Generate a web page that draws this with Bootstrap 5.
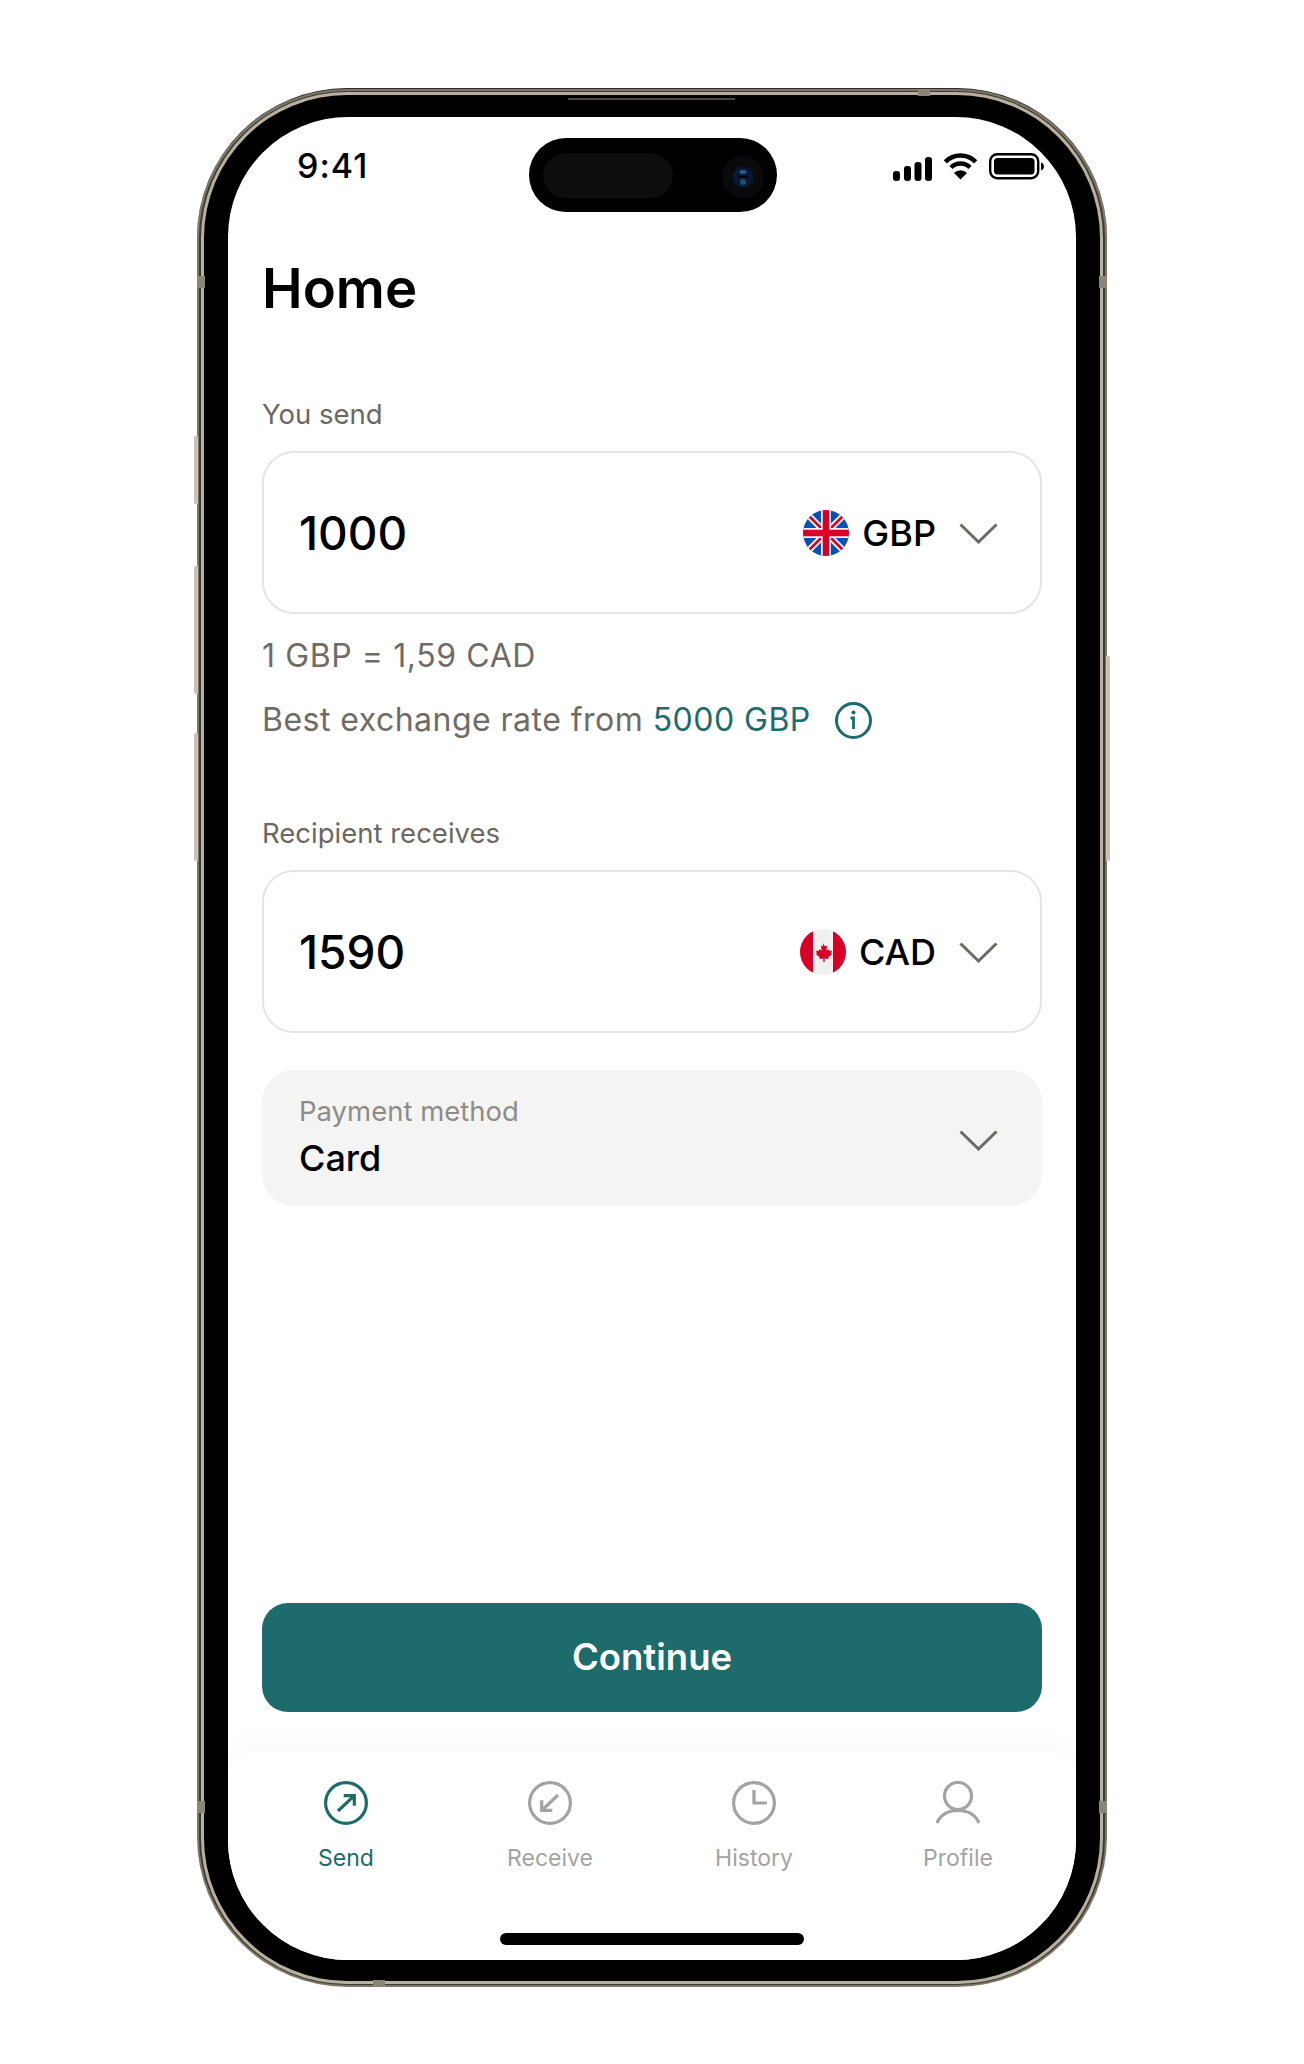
<!DOCTYPE html>
<html lang="en">
<head>
    <meta charset="UTF-8">
    <meta name="viewport" content="width=device-width, initial-scale=1.0">
    <title>Home</title>
    <link rel="stylesheet" href="https://cdn.jsdelivr.net/npm/bootstrap@5.3.0/dist/css/bootstrap.min.css">
    <style>
        body { background: #fff; font-family: "Inter", "Liberation Sans", sans-serif; color: #000; }
        .page-wrap { padding: 88px 0 77px; }

        /* phone body */
        .phone-shell { position: relative; width: 910px; height: 1899px; padding: 2px; border-radius: 150px; background: #7d776a; border-top: 1px solid #2f2c26; }
        .phone-band { height: 100%; padding: 1px 2px; border-radius: 148px; background: #3e3a33; }
        .phone-rim { height: 100%; padding: 3px; border-radius: 146px; background: #b8b0a0; }
        .phone-bezel { height: 100%; padding: 22px 24px 21px; border-radius: 143px; background: #000; }
        .phone-screen { height: 100%; border-radius: 120px; background: #fff; overflow: hidden; }
        .speaker-slit { position: absolute; top: 9px; left: 371px; width: 167px; height: 2px; background: #4a4741; }
        .side-key { position: absolute; width: 4px; background: #c9c2b2; border-radius: 2px 0 0 2px; }
        .key-a { left: -3px; top: 347px; height: 68px; }
        .key-b { left: -3px; top: 477px; height: 128px; }
        .key-c { left: -3px; top: 644px; height: 128px; }
        .key-d { right: -3px; top: 567px; height: 205px; border-radius: 0 2px 2px 0; }
        .ant-mark { position: absolute; background: #8a8577; }
        .ant-l1 { left: 0; top: 187px; width: 8px; height: 12px; }
        .ant-r1 { right: 0; top: 187px; width: 8px; height: 12px; }
        .ant-l2 { left: 0; top: 1712px; width: 8px; height: 12px; }
        .ant-r2 { right: 0; top: 1712px; width: 8px; height: 12px; }
        .ant-t { top: 0; left: 721px; width: 12px; height: 7px; }
        .ant-b { bottom: 0; left: 176px; width: 12px; height: 7px; }

        /* status bar */
        .status-row { height: 95px; padding-top: 21px; }
        .clock-text { width: 301px; padding-left: 69px; padding-top: 8px; font-size: 34px; line-height: 40px; font-weight: 500; letter-spacing: 1px; }
        .island { width: 248px; height: 74px; border-radius: 37px; background: #000; padding: 15px 14px; }
        .island-pill { width: 130px; height: 45px; border-radius: 23px; background: #0d0d0d; }
        .island-cam { margin-right: -1px; margin-top: 3px; }
        .status-icons { width: 299px; padding: 15px 0 0 116px; gap: 11px; }

        /* content */
        .main-pane { padding: 0 34px; }
        .page-title { margin: 44px 0 76px; font-size: 54.5px; line-height: 64px; font-weight: 600; font-family: "Inter", sans-serif; }
        .field-label { font-size: 27.5px; line-height: 36px; color: #6b6862; margin-bottom: 19px; }
        .amount-box { height: 163px; border: 2px solid #e5e5e4; border-radius: 32px; padding: 0 42px 0 35px; }
        .amount-value { font-size: 46px; line-height: 56px; font-weight: 500; }
        .currency-code { font-size: 36px; line-height: 44px; font-weight: 500; margin-left: 13px; margin-right: 23px; }
        .chev-icon { margin-top: 2px; }
        .rate-line { font-size: 32px; line-height: 40px; color: #6f6b66; letter-spacing: .6px; }
        .rate-tight { letter-spacing: .47px; }
        .teal-text { color: #1d6b6b; }
        .pay-box { height: 136px; margin-top: 37px; padding: 0 44px 0 37px; border-radius: 32px; background: #f4f4f4; }
        .pay-box .chev-icon { margin-top: 4px; }
        .pay-hint { font-size: 27.5px; line-height: 36px; color: #8f8c86; margin-top: -4px; }
        .pay-value { font-size: 36px; line-height: 44px; font-weight: 500; margin-top: 7px; }
        .go-btn { height: 109px; margin-bottom: 39px; border-radius: 26px; background: #1d6b6b; border: 0; color: #fff; font-size: 36.5px; font-weight: 600; }
        .go-btn:hover { background: #1d6b6b; color: #fff; }

        /* bottom bar */
        .tab-bar { padding: 30px 16px 15px; border-radius: 28px 28px 0 0; background: #fff; box-shadow: 0 -6px 30px rgba(0, 0, 0, .03); }
        .tab-item { width: 204px; font-size: 23px; line-height: 32px; font-weight: 400; color: #a3a3a3; }
        .tab-item svg { display: block; margin: 0 auto 17px; }
        .tab-active { color: #1d6b6b; }
        .home-bar { width: 304px; height: 12px; margin-top: 59px; border-radius: 6px; background: #000; }
    </style>
</head>

<body>
    <div class="page-wrap d-flex justify-content-center">
        <div class="phone-shell">
            <span class="side-key key-a"></span>
            <span class="side-key key-b"></span>
            <span class="side-key key-c"></span>
            <span class="side-key key-d"></span>
            <div class="phone-band">
                <div class="phone-rim">
                    <div class="phone-bezel">
                        <div class="phone-screen d-flex flex-column">

                            <div class="status-row d-flex flex-shrink-0">
                                <div class="clock-text">9:41</div>
                                <div class="island d-flex justify-content-between">
                                    <div class="island-pill"></div>
                                    <svg class="island-cam" width="42" height="42" viewBox="0 0 42 42">
                                        <circle cx="21" cy="21" r="21" fill="#0a0a0c"/>
                                        <circle cx="21" cy="21" r="10.500" fill="#0a1836"/>
                                        <ellipse cx="21" cy="16" rx="3.500" ry="2" fill="#2c5c88"/>
                                        <circle cx="21" cy="26" r="3" fill="#1f5068"/>
                                        <rect x="16" y="20" width="10" height="2" fill="#050812"/>
                                    </svg>
                                </div>
                                <div class="status-icons d-flex align-items-start">
                                    <svg width="39" height="24" viewBox="0 0 39 24" class="mt-1">
                                        <rect x="0" y="14" width="7" height="10" rx="3" fill="#000"/>
                                        <rect x="11" y="9" width="7" height="15" rx="3" fill="#000"/>
                                        <rect x="21.500" y="5" width="7" height="19" rx="3" fill="#000"/>
                                        <rect x="32" y="0" width="7" height="24" rx="3" fill="#000"/>
                                    </svg>
                                    <svg width="35" height="27" viewBox="0 0 35 27">
                                        <path d="M2.300 8.800A21.500 21.500 0 0 1 32.700 8.800" fill="none" stroke="#000" stroke-width="4.500"/>
                                        <path d="M8 14.500A13.500 13.500 0 0 1 27 14.500" fill="none" stroke="#000" stroke-width="4.500"/>
                                        <path d="M17.500 26.500L11 20A9 9 0 0 1 24 20Z" fill="#000"/>
                                    </svg>
                                    <svg width="56" height="27" viewBox="0 0 56 27">
                                        <rect x="1.200" y="1.200" width="48" height="24" rx="7" fill="none" stroke="#000" stroke-width="2.400"/>
                                        <rect x="5" y="5" width="40.500" height="16.500" rx="3.500" fill="#000"/>
                                        <path d="M52 9.500c1.800.6 3 2.200 3 4s-1.200 3.400-3 4z" fill="#000"/>
                                    </svg>
                                </div>
                            </div>

                            <div class="main-pane d-flex flex-column flex-grow-1">
                                <h1 class="page-title">Home</h1>

                                <div class="field-label">You send</div>
                                <div class="amount-box d-flex align-items-center justify-content-between">
                                    <div class="amount-value">1000</div>
                                    <div class="d-flex align-items-center">
                                        <svg width="46" height="46" viewBox="0 0 46 46">
                                            <defs><clipPath id="ukClip"><circle cx="23" cy="23" r="23"/></clipPath></defs>
                                            <g clip-path="url(#ukClip)">
                                                <rect width="46" height="46" fill="#0052b4"/>
                                                <path d="M0 0L46 46M46 0L0 46" stroke="#f0f0f0" stroke-width="6.500"/>
                                                <path d="M6 6L19 19M40 6L27 19M6 40L19 27M40 40L27 27" stroke="#d80027" stroke-width="2.500"/>
                                                <path d="M23 0V46M0 23H46" stroke="#f0f0f0" stroke-width="10"/>
                                                <path d="M23 0V46M0 23H46" stroke="#d80027" stroke-width="6.500"/>
                                            </g>
                                        </svg>
                                        <span class="currency-code">GBP</span>
                                        <svg class="chev-icon" width="39" height="21" viewBox="0 0 39 21"><path d="M1.500 1.500L19.500 19L37.500 1.500" fill="none" stroke="#6b6b66" stroke-width="3"/></svg>
                                    </div>
                                </div>

                                <div class="rate-line" style="margin-top:22px">1 GBP = 1,59 CAD</div>
                                <div class="rate-line rate-tight d-flex align-items-center" style="margin-top:24px">
                                    <span>Best exchange rate from&nbsp;<span class="teal-text">5000 GBP</span></span>
                                    <svg class="ms-4" width="37" height="37" viewBox="0 0 37 37">
                                        <circle cx="18.500" cy="18.500" r="17" fill="none" stroke="#1d6b6b" stroke-width="3"/>
                                        <circle cx="18.500" cy="10.500" r="2" fill="#1d6b6b"/>
                                        <path d="M15.500 16H18.500V27" fill="none" stroke="#1d6b6b" stroke-width="2.800"/>
                                    </svg>
                                </div>

                                <div class="field-label" style="margin-top:75px">Recipient receives</div>
                                <div class="amount-box d-flex align-items-center justify-content-between">
                                    <div class="amount-value">1590</div>
                                    <div class="d-flex align-items-center">
                                        <svg width="46" height="46" viewBox="0 0 46 46">
                                            <defs><clipPath id="caClip"><circle cx="23" cy="23" r="23"/></clipPath></defs>
                                            <g clip-path="url(#caClip)">
                                                <rect width="46" height="46" fill="#f0f0f0"/>
                                                <rect width="13" height="46" fill="#d80027"/>
                                                <rect x="33" width="13" height="46" fill="#d80027"/>
                                                <path d="M23 14l2 3.600 2.200-1-.8 5 2.400-1.400.6 1.800 2.600-.4-.8 2.800 1 .6-4 3.400.5 1.700-4 -.5V33h-1.400v-3.400l-4 .5.500-1.700-4-3.400 1-.6-.8-2.800 2.600.4.600-1.800 2.400 1.400-.8-5 2.200 1z" fill="#d80027"/>
                                            </g>
                                        </svg>
                                        <span class="currency-code">CAD</span>
                                        <svg class="chev-icon" width="39" height="21" viewBox="0 0 39 21"><path d="M1.500 1.500L19.500 19L37.500 1.500" fill="none" stroke="#6b6b66" stroke-width="3"/></svg>
                                    </div>
                                </div>

                                <div class="pay-box d-flex align-items-center justify-content-between">
                                    <div>
                                        <div class="pay-hint">Payment method</div>
                                        <div class="pay-value">Card</div>
                                    </div>
                                    <svg class="chev-icon" width="39" height="21" viewBox="0 0 39 21"><path d="M1.500 1.500L19.500 19L37.500 1.500" fill="none" stroke="#6b6b66" stroke-width="3"/></svg>
                                </div>

                                <button type="button" class="btn go-btn w-100 mt-auto">Continue</button>
                            </div>

                            <div class="tab-bar flex-shrink-0">
                                <div class="d-flex text-center">
                                    <div class="tab-item tab-active">
                                        <svg width="44" height="44" viewBox="0 0 44 44" fill="none" stroke="#1d6b6b" stroke-width="3.200">
                                            <circle cx="22" cy="22" r="20.400"/>
                                            <path d="M14 30L30.300 14.700M19.700 14.700H30.300V24.700"/>
                                        </svg>
                                        Send
                                    </div>
                                    <div class="tab-item">
                                        <svg width="44" height="44" viewBox="0 0 44 44" fill="none" stroke="#a3a3a3" stroke-width="3.200">
                                            <circle cx="22" cy="22" r="20.400"/>
                                            <path d="M30 14L13.700 29.300M24.300 29.300H13.700V19.300"/>
                                        </svg>
                                        Receive
                                    </div>
                                    <div class="tab-item">
                                        <svg width="44" height="44" viewBox="0 0 44 44" fill="none" stroke="#a3a3a3" stroke-width="3.200">
                                            <circle cx="22" cy="22" r="20.400"/>
                                            <path d="M22 9V22H35"/>
                                        </svg>
                                        History
                                    </div>
                                    <div class="tab-item">
                                        <svg width="44" height="44" viewBox="0 0 44 44" fill="none" stroke="#a3a3a3" stroke-width="3.200">
                                            <circle cx="22" cy="15" r="13.500"/>
                                            <path d="M1 42C5 33 13 29.500 22 29.500C31 29.500 39 33 43 42"/>
                                        </svg>
                                        Profile
                                    </div>
                                </div>
                                <div class="home-bar mx-auto"></div>
                            </div>

                        </div>
                    </div>
                </div>
            </div>
            <span class="speaker-slit"></span>
            <span class="ant-mark ant-l1"></span>
            <span class="ant-mark ant-r1"></span>
            <span class="ant-mark ant-l2"></span>
            <span class="ant-mark ant-r2"></span>
            <span class="ant-mark ant-t"></span>
            <span class="ant-mark ant-b"></span>
        </div>
    </div>

    <script src="https://cdn.jsdelivr.net/npm/bootstrap@5.3.0/dist/js/bootstrap.bundle.min.js"></script>
</body>
</html>
